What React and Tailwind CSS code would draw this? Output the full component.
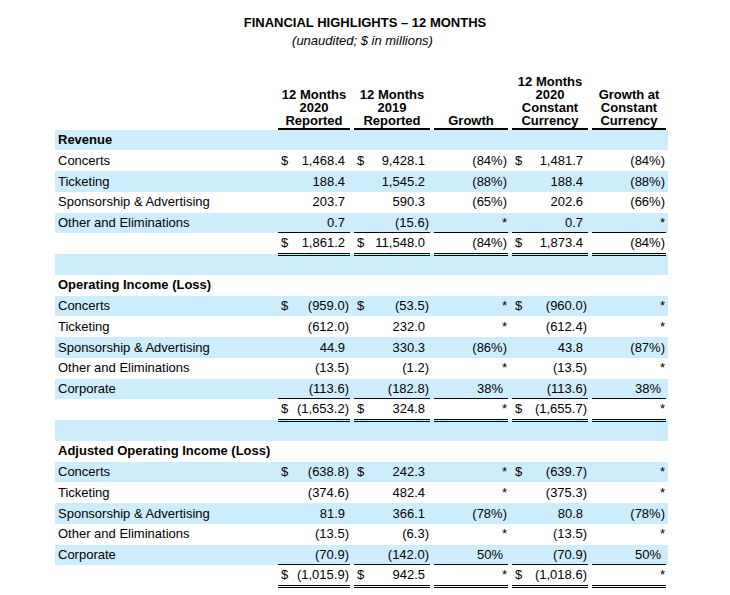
import React from "react";

const BLUE = "bg-[#cdedfd]";

const sections = [
  {
    title: "Revenue",
    rows: [
      ["Concerts", ["$", "1,468.4"], ["$", "9,428.1"], "(84%)", ["$", "1,481.7"], "(84%)"],
      ["Ticketing", ["", "188.4"], ["", "1,545.2"], "(88%)", ["", "188.4"], "(88%)"],
      ["Sponsorship & Advertising", ["", "203.7"], ["", "590.3"], "(65%)", ["", "202.6"], "(66%)"],
      ["Other and Eliminations", ["", "0.7"], ["", "(15.6)"], "*", ["", "0.7"], "*"],
    ],
    total: ["", ["$", "1,861.2"], ["$", "11,548.0"], "(84%)", ["$", "1,873.4"], "(84%)"],
  },
  {
    title: "Operating Income (Loss)",
    rows: [
      ["Concerts", ["$", "(959.0)"], ["$", "(53.5)"], "*", ["$", "(960.0)"], "*"],
      ["Ticketing", ["", "(612.0)"], ["", "232.0"], "*", ["", "(612.4)"], "*"],
      ["Sponsorship & Advertising", ["", "44.9"], ["", "330.3"], "(86%)", ["", "43.8"], "(87%)"],
      ["Other and Eliminations", ["", "(13.5)"], ["", "(1.2)"], "*", ["", "(13.5)"], "*"],
      ["Corporate", ["", "(113.6)"], ["", "(182.8)"], "38%", ["", "(113.6)"], "38%"],
    ],
    total: ["", ["$", "(1,653.2)"], ["$", "324.8"], "*", ["$", "(1,655.7)"], "*"],
  },
  {
    title: "Adjusted Operating Income (Loss)",
    rows: [
      ["Concerts", ["$", "(638.8)"], ["$", "242.3"], "*", ["$", "(639.7)"], "*"],
      ["Ticketing", ["", "(374.6)"], ["", "482.4"], "*", ["", "(375.3)"], "*"],
      ["Sponsorship & Advertising", ["", "81.9"], ["", "366.1"], "(78%)", ["", "80.8"], "(78%)"],
      ["Other and Eliminations", ["", "(13.5)"], ["", "(6.3)"], "*", ["", "(13.5)"], "*"],
      ["Corporate", ["", "(70.9)"], ["", "(142.0)"], "50%", ["", "(70.9)"], "50%"],
    ],
    total: ["", ["$", "(1,015.9)"], ["$", "942.5"], "*", ["$", "(1,018.6)"], "*"],
  },
];

const GRID = "grid grid-cols-[221px_76px_80px_78px_80px_78px]";

function ValueCell({ cell, line }) {
  const [d, v] = Array.isArray(cell) ? cell : ["", cell];
  const tight = v.endsWith(")") || v === "*";
  const border =
    line === "single"
      ? "border-b border-black"
      : line === "double"
      ? "border-b-[3px] border-double border-black"
      : "";
  return (
    <div className={`mx-[2px] h-full flex items-center justify-between ${border}`}>
      <span className="pl-[3px]">{d}</span>
      <span className={tight ? "pr-[1px]" : "pr-[5px]"}>{v}</span>
    </div>
  );
}

function Row({ cells, blue, line }) {
  return (
    <div className={`${GRID} h-[20.75px] ${blue ? BLUE : "bg-white"}`}>
      <div className="pl-[3px] flex items-center whitespace-nowrap">{cells[0]}</div>
      {cells.slice(1).map((c, i) => (
        <ValueCell key={i} cell={c} line={line} />
      ))}
    </div>
  );
}

function EmptyRow({ blue, title }) {
  return (
    <div className={`${GRID} h-[20.75px] ${blue ? BLUE : "bg-white"}`}>
      <div className="pl-[3px] flex items-center whitespace-nowrap font-bold">{title}</div>
      <div />
      <div />
      <div />
      <div />
      <div />
    </div>
  );
}

export default function App() {
  const rows = [];
  let idx = 0;
  sections.forEach((s, si) => {
    if (si > 0) {
      rows.push(<EmptyRow key={`b${si}`} blue={idx % 2 === 0} title="" />);
      idx++;
    }
    rows.push(<EmptyRow key={`t${si}`} blue={idx % 2 === 0} title={s.title} />);
    idx++;
    s.rows.forEach((r, ri) => {
      rows.push(
        <Row
          key={`r${si}-${ri}`}
          cells={r}
          blue={idx % 2 === 0}
          line={ri === s.rows.length - 1 ? "single" : ""}
        />
      );
      idx++;
    });
    rows.push(<Row key={`tot${si}`} cells={s.total} blue={idx % 2 === 0} line="double" />);
    idx++;
  });

  const headers = [
    ["12 Months", "2020", "Reported"],
    ["12 Months", "2019", "Reported"],
    ["Growth"],
    ["12 Months", "2020", "Constant", "Currency"],
    ["Growth at", "Constant", "Currency"],
  ];

  return (
    <div className="w-[730px] h-[595px] bg-white text-black text-[13px] font-['Liberation_Sans',Arial,sans-serif] overflow-hidden pt-[15px]">
      <div className="text-center font-bold leading-[16px]">FINANCIAL HIGHLIGHTS – 12 MONTHS</div>
      <div className="text-center italic leading-[16px] mt-[2px] pr-[5px]">(unaudited; $ in millions)</div>
      <div className="ml-[55px] w-[613px] mt-[25.5px]">
        <div className={`${GRID} items-end`}>
          <div />
          {headers.map((h, i) => (
            <div key={i} className="mx-[2px] border-b-2 border-black pb-[1px] text-center font-bold leading-[13px]">
              {h.map((l, j) => (
                <div key={j}>{l}</div>
              ))}
            </div>
          ))}
        </div>
        {rows}
      </div>
    </div>
  );
}
